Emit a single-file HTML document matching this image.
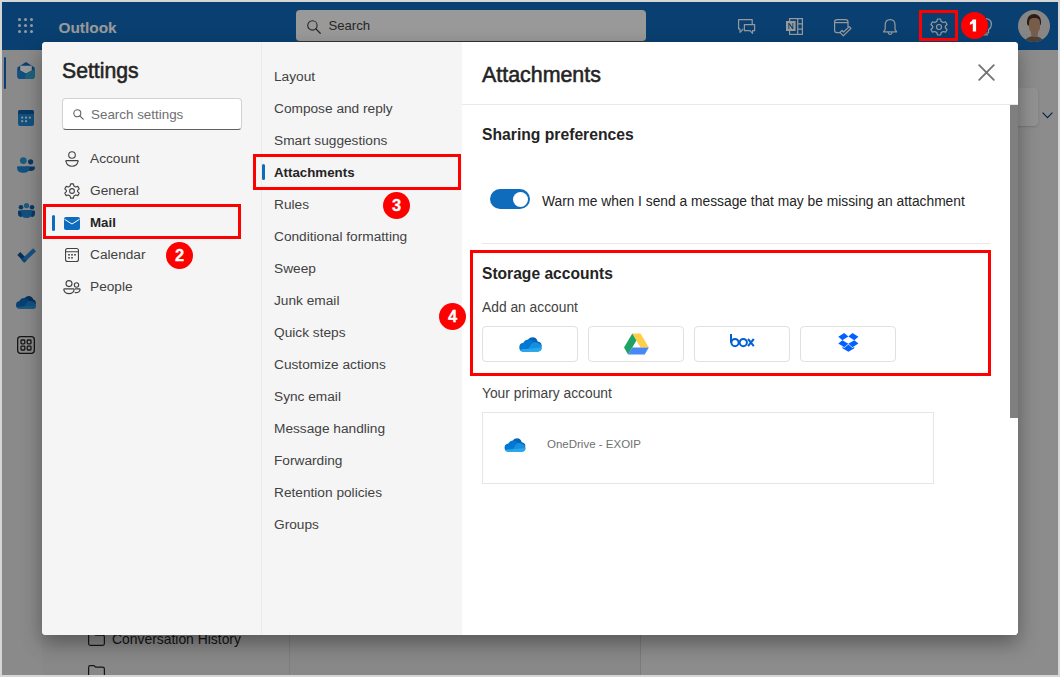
<!DOCTYPE html>
<html><head><meta charset="utf-8">
<style>
*{box-sizing:border-box;margin:0;padding:0}
html,body{width:1060px;height:677px;overflow:hidden;background:#d6d6d6;font-family:"Liberation Sans",sans-serif}
.abs{position:absolute}
svg{position:absolute;overflow:visible}
#app{position:absolute;left:2px;top:2px;width:1056px;height:673px;background:#e9e9e9;overflow:hidden}
#hdr{position:absolute;left:0;top:0;width:1056px;height:48px;background:#0f6cbd}
#rail{position:absolute;left:0;top:48px;width:40px;height:625px;background:#e6e6e6}
#overlay{position:absolute;left:0;top:0;width:1056px;height:673px;background:rgba(0,0,0,0.4)}
#modal{position:absolute;left:42px;top:42px;width:976px;height:593px;background:#fff;border-radius:4px;overflow:hidden;box-shadow:0 8px 20px rgba(0,0,0,0.36)}
#lcol{position:absolute;left:0;top:0;width:220px;height:593px;background:#f5f5f5;border-right:1px solid #ebebeb}
#mcol{position:absolute;left:220px;top:0;width:200px;height:593px;background:#f5f5f5}
#rpane{position:absolute;left:420px;top:0;width:556px;height:593px;background:#fff}
.item{position:absolute;height:32px;line-height:32px;font-size:13.7px;color:#424242;white-space:nowrap}
.sel{font-weight:bold;font-size:13.3px;color:#242424}
.ind{position:absolute;width:3px;height:16px;border-radius:2px;background:#0f6cbd}
.redbox{position:absolute;border:3px solid #ff0000}
.badge{position:absolute;width:27px;height:27px;border-radius:50%;background:#ff0000;color:#fff;font-weight:bold;font-size:16.5px;text-align:center;line-height:27px;-webkit-text-stroke:0.3px #fff}
.t{position:absolute;white-space:nowrap;line-height:1}
.btn{position:absolute;top:284px;width:96px;height:36px;border:1px solid #e0e0e0;border-radius:4px;background:#fff}
</style></head><body>
<div id="app">
  <div id="hdr">
    <svg style="left:16px;top:16px" width="16" height="16" viewBox="0 0 16 16"><g fill="#fff"><circle cx="1.5" cy="1.5" r="1.5"/><circle cx="7.5" cy="1.5" r="1.5"/><circle cx="13.5" cy="1.5" r="1.5"/><circle cx="1.5" cy="7.5" r="1.5"/><circle cx="7.5" cy="7.5" r="1.5"/><circle cx="13.5" cy="7.5" r="1.5"/><circle cx="1.5" cy="13.5" r="1.5"/><circle cx="7.5" cy="13.5" r="1.5"/><circle cx="13.5" cy="13.5" r="1.5"/></g></svg>
    <div class="t" style="left:56.5px;top:18px;font-size:15.4px;font-weight:bold;color:#fff">Outlook</div>
    <div class="abs" style="left:294px;top:8px;width:350px;height:32px;background:#fff;border-radius:4px;border-bottom:1px solid #555"></div>
    <svg style="left:304.5px;top:18px" width="14" height="14" viewBox="0 0 15 15"><circle cx="5.8" cy="5.8" r="5" fill="none" stroke="#424242" stroke-width="1.2"/><path d="M9.4 9.4 L14.2 14.2" stroke="#424242" stroke-width="1.3" stroke-linecap="round"/></svg>
    <div class="t" style="left:326.4px;top:17px;font-size:13.2px;color:#424242">Search</div>
    <!-- chat -->
    <svg style="left:736px;top:17px" width="18" height="16" viewBox="0 0 18 16"><g fill="none" stroke="#fff" stroke-width="1.2" stroke-linejoin="round"><path d="M5.2 9.8 L2.1 13.4 L1.9 9.8 H0.6 V0.6 H14.2 V5.6"/><path d="M6.4 5.6 H16.6 V11.7 H14.5 V14.3 L11.9 11.7 H6.4 Z"/></g></svg>
    <!-- onenote -->
    <svg style="left:784px;top:16px" width="17" height="17" viewBox="0 0 17 17"><g fill="none" stroke="#fff" stroke-width="1.2"><rect x="3.6" y="0.6" width="12.8" height="15.8"/><path d="M11.7 0.6 V16.4 M11.7 5.9 H16.4 M11.7 11.1 H16.4"/></g><rect x="0" y="3" width="9.6" height="10" fill="#fff"/><path d="M2.4 11 V5 H3.4 L6.4 9.2 V5 H7.3 V11 H6.3 L3.3 6.8 V11 Z" fill="#0f6cbd"/></svg>
    <!-- todo -->
    <svg style="left:832px;top:17px" width="18" height="18" viewBox="0 0 18 18"><g fill="none" stroke="#fff" stroke-width="1.2" stroke-linejoin="round"><path d="M6.5 13.6 H3 Q0.6 13.6 0.6 11.2 V3 Q0.6 0.6 3 0.6 H11.6 Q14 0.6 14 3 V8"/><path d="M0.6 3.6 H14"/><path d="M6 13.3 L8.1 11.5 L9.5 13 L15.3 7.6 L17 9.4 L9.3 16.8 Z"/></g></svg>
    <!-- bell -->
    <svg style="left:881px;top:17px" width="15" height="17" viewBox="0 0 15 17"><g fill="none" stroke="#fff" stroke-width="1.2" stroke-linejoin="round"><path d="M7.1 0.6 Q2.2 0.6 2.2 6 V10.2 L0.6 12.9 H13.6 L12 10.2 V6 Q12 0.6 7.1 0.6 Z"/><path d="M5.2 13 Q5.4 15.5 7.1 15.5 Q8.8 15.5 9 13"/></g></svg>
    <!-- gear -->
    <svg style="left:927.5px;top:15.5px" width="18" height="18" viewBox="0 0 16 16"><path d="M6.6 0.9 L9.4 0.9 L9.9 3 L11.7 4 L13.8 3.4 L15.2 5.8 L13.6 7.3 L13.6 8.7 L15.2 10.2 L13.8 12.6 L11.7 12 L9.9 13 L9.4 15.1 L6.6 15.1 L6.1 13 L4.3 12 L2.2 12.6 L0.8 10.2 L2.4 8.7 L2.4 7.3 L0.8 5.8 L2.2 3.4 L4.3 4 L6.1 3 Z" fill="none" stroke="#fff" stroke-width="1.05" stroke-linejoin="round"/><circle cx="8" cy="8" r="2.2" fill="none" stroke="#fff" stroke-width="1.05"/></svg>
    <!-- bulb -->
    <svg style="left:975px;top:16px" width="16" height="18" viewBox="0 0 16 18"><g fill="none" stroke="#fff" stroke-width="1.2"><path d="M8 0.6 Q14.4 0.6 14.4 6.6 Q14.4 9.5 11.5 11.8 V15 H4.5 V11.8 Q1.6 9.5 1.6 6.6 Q1.6 0.6 8 0.6Z"/><path d="M5 16.8 H11"/></g></svg>
    <!-- avatar -->
    <div class="abs" style="left:1016px;top:8px;width:32px;height:32px;border-radius:50%;background:#e2e0de;overflow:hidden">
      <div class="abs" style="left:9px;top:4px;width:14px;height:12px;border-radius:7px 7px 3px 3px;background:#4a3024"></div>
      <div class="abs" style="left:10.5px;top:8px;width:11px;height:15px;border-radius:5px 5px 6px 6px;background:#c99a7c"></div>
      <div class="abs" style="left:4px;top:26px;width:24px;height:12px;border-radius:12px 12px 0 0;background:#7d6a5e"></div>
      <div class="abs" style="left:12.5px;top:21px;width:7px;height:6px;background:#c99a7c;border-radius:0 0 4px 4px"></div>
    </div>
  </div>
  <div id="rail">
    <div class="abs" style="left:2px;top:7px;width:2px;height:32px;background:#0f6cbd;border-radius:1px"></div>
    <!-- mail -->
    <svg style="left:15px;top:12px" width="18" height="17" viewBox="0 0 18 17"><path d="M9 0 L17.6 5.6 V14 Q17.6 17 14.6 17 H3.4 Q0.4 17 0.4 14 V5.6 Z" fill="#0f6cbd"/><path d="M3.2 3.8 H14.8 V8.6 L9 11.6 L3.2 8.6 Z" fill="#fff"/><path d="M0.4 7.2 L9 11.8 L17.6 7.2 V14 Q17.6 17 14.6 17 H3.4 Q0.4 17 0.4 14 Z" fill="#1f86d6"/><path d="M9 11.8 L17.6 7.2 V14 Q17.6 17 14.6 17 H8 Z" fill="#36a9c9" opacity="0.85"/></svg>
    <!-- calendar -->
    <svg style="left:16px;top:60px" width="16" height="16" viewBox="0 0 16 16"><rect x="0" y="0" width="16" height="16" rx="2.2" fill="#1f86d6"/><path d="M0 2.2 Q0 0 2.2 0 H13.8 Q16 0 16 2.2 V4 H0Z" fill="#0f5ea8"/><g fill="#fff" opacity="0.9"><rect x="3.2" y="6.6" width="2" height="2"/><rect x="7" y="6.6" width="2" height="2"/><rect x="10.8" y="6.6" width="2" height="2"/><rect x="3.2" y="10.2" width="2" height="2"/><rect x="7" y="10.2" width="2" height="2"/></g></svg>
    <!-- people -->
    <svg style="left:15px;top:107px" width="18" height="16" viewBox="0 0 18 16"><circle cx="13.6" cy="4.8" r="2.6" fill="#0f5ea8"/><path d="M9 9.6 H17 Q18 9.6 18 10.6 Q18 14 13.5 14 Q10.5 14 9 12.6Z" fill="#0f5ea8"/><circle cx="6.3" cy="3.6" r="3.4" fill="#2b98d8"/><path d="M1 9.2 H11.6 Q12.6 9.2 12.6 10.2 Q12.6 15.8 6.3 15.8 Q0 15.8 0 10.2 Q0 9.2 1 9.2Z" fill="#1f86d6"/></svg>
    <!-- groups -->
    <svg style="left:15.5px;top:152.5px" width="17" height="15" viewBox="0 0 17 15"><circle cx="3" cy="4.3" r="2.3" fill="#0f5ea8"/><circle cx="14" cy="4.3" r="2.3" fill="#0f5ea8"/><path d="M0 8.6 Q0 7.6 1 7.6 H5 V13 Q3.5 14 2.5 14 Q0 13.5 0 11Z" fill="#0f5ea8"/><path d="M17 8.6 Q17 7.6 16 7.6 H12 V13 Q13.5 14 14.5 14 Q17 13.5 17 11Z" fill="#0f5ea8"/><circle cx="8.5" cy="2.6" r="2.6" fill="#2b98d8"/><path d="M4.2 7 H12.8 Q13.8 7 13.8 8 V10 Q13.8 15 8.5 15 Q3.2 15 3.2 10 V8 Q3.2 7 4.2 7Z" fill="#1f86d6"/></svg>
    <!-- todo check -->
    <svg style="left:14px;top:199px" width="20" height="16" viewBox="0 0 20 16"><path d="M2.8 4.6 L8.6 10.4" stroke="#0a4f96" stroke-width="4.2"/><path d="M6.6 12.2 L18.6 0.8" stroke="#2b88d8" stroke-width="4.2"/><path d="M6.2 9.8 L8.6 12.2 L10 10.8" fill="none" stroke="#1a6fc4" stroke-width="2"/></svg>
    <!-- onedrive -->
    <svg style="left:14px;top:246px" width="20" height="13" viewBox="0 0 20 13"><path d="M8 2.6 Q10 0 12.6 0 Q16 0 17.4 3.6 Q20 4.2 20 8 L11 6 Z" fill="#0a4f96"/><path d="M0 9 Q0 5.6 3.4 5 Q5 1.6 9 2 Q11.6 2.3 13 4.5 L7.5 12.8 H3.8 Q0 12.8 0 9Z" fill="#0f6cbd"/><path d="M6.6 12.8 L12.2 5 Q16.4 4.6 18 6 Q20 7 20 9.4 Q20 12.8 16.4 12.8Z" fill="#1f86d6"/><path d="M0.6 11 L20 9.4 Q20 12.8 16.4 12.8 H3.8 Q1.4 12.8 0.6 11Z" fill="#2b98d8"/></svg>
    <!-- apps -->
    <svg style="left:15px;top:286px" width="18" height="18" viewBox="0 0 18 18"><g fill="none" stroke="#242424" stroke-width="1.3"><rect x="0.65" y="0.65" width="16.7" height="16.7" rx="3"/><rect x="4" y="4" width="3.8" height="3.8" rx="0.8"/><rect x="10.2" y="4" width="3.8" height="3.8" rx="0.8"/><rect x="4" y="10.2" width="3.8" height="3.8" rx="0.8"/><rect x="10.2" y="10.2" width="3.8" height="3.8" rx="0.8"/></g></svg>
  </div>
  <!-- background folder pane text -->
  <div class="abs" style="left:40px;top:48px;width:598px;height:625px;background:#e3e3e3"></div>
  <svg style="left:86px;top:631px" width="17" height="13" viewBox="0 0 17 13"><path d="M0.6 2.4 Q0.6 0.6 2.4 0.6 H6 L7.6 2.2 H14.6 Q16.4 2.2 16.4 4 V10.6 Q16.4 12.4 14.6 12.4 H2.4 Q0.6 12.4 0.6 10.6 Z" fill="none" stroke="#242424" stroke-width="1.2"/></svg>
  <div class="t" style="left:110px;top:631px;font-size:13.9px;color:#242424">Conversation History</div>
  <svg style="left:86px;top:663px" width="17" height="13" viewBox="0 0 17 13"><path d="M0.6 2.4 Q0.6 0.6 2.4 0.6 H6 L7.6 2.2 H14.6 Q16.4 2.2 16.4 4 V10.6 Q16.4 12.4 14.6 12.4 H2.4 Q0.6 12.4 0.6 10.6 Z" fill="none" stroke="#242424" stroke-width="1.2"/></svg>
  <div class="abs" style="left:287px;top:48px;width:1px;height:625px;background:#d0d0d0"></div>
  <div class="abs" style="left:638px;top:48px;width:1px;height:625px;background:#cdcdcd"></div>
  <div class="abs" style="left:996px;top:86px;width:40px;height:38px;border-radius:4px;background:#f3f3f3;box-shadow:0 1px 2px rgba(0,0,0,0.15)"></div>
  <svg style="left:1040px;top:110px" width="11" height="7" viewBox="0 0 11 7"><path d="M0.6 0.6 L5.5 5.6 L10.4 0.6" fill="none" stroke="#0f3f70" stroke-width="1.2"/></svg>
  <div id="overlay"></div>
</div>
<div id="modal">
  <div id="lcol">
    <div class="t" style="left:20px;top:18px;font-size:21.2px;color:#242424;-webkit-text-stroke:0.55px #242424">Settings</div>
    <div class="abs" style="left:20px;top:56px;width:180px;height:32px;background:#fff;border:1px solid #d1d1d1;border-bottom-color:#616161;border-radius:4px"></div>
    <svg style="left:31px;top:67px" width="11" height="11" viewBox="0 0 11 11"><circle cx="4.3" cy="4.3" r="3.5" fill="none" stroke="#616161" stroke-width="1.1"/><path d="M6.8 6.8 L10.2 10.2" stroke="#616161" stroke-width="1.2" stroke-linecap="round"/></svg>
    <div class="t" style="left:49px;top:66px;font-size:13.4px;color:#707070">Search settings</div>
    <div class="item" style="left:48px;top:101px">Account</div>
    <div class="item" style="left:48px;top:133px">General</div>
    <div class="ind" style="left:10px;top:173px"></div>
    <div class="item sel" style="left:48px;top:165px">Mail</div>
    <div class="item" style="left:48px;top:197px">Calendar</div>
    <div class="item" style="left:48px;top:229px">People</div>
    <!-- icons -->
    <svg style="left:23px;top:109px" width="14" height="16" viewBox="0 0 14 16"><circle cx="7" cy="4" r="3.3" fill="none" stroke="#424242" stroke-width="1.1"/><path d="M1.2 9.6 H12.8 Q13.3 9.6 13.1 10.4 Q12 15.2 7 15.2 Q2 15.2 0.9 10.4 Q0.7 9.6 1.2 9.6Z" fill="none" stroke="#424242" stroke-width="1.1"/></svg>
    <svg style="left:22px;top:141px" width="16" height="16" viewBox="0 0 16 16"><path d="M6.6 0.9 L9.4 0.9 L9.9 3 L11.7 4 L13.8 3.4 L15.2 5.8 L13.6 7.3 L13.6 8.7 L15.2 10.2 L13.8 12.6 L11.7 12 L9.9 13 L9.4 15.1 L6.6 15.1 L6.1 13 L4.3 12 L2.2 12.6 L0.8 10.2 L2.4 8.7 L2.4 7.3 L0.8 5.8 L2.2 3.4 L4.3 4 L6.1 3 Z" fill="none" stroke="#424242" stroke-width="1.1" stroke-linejoin="round"/><circle cx="8" cy="8" r="2.4" fill="none" stroke="#424242" stroke-width="1.1"/></svg>
    <svg style="left:22px;top:175px" width="16" height="13" viewBox="0 0 16 13"><rect x="0" y="0" width="16" height="13" rx="2" fill="#0f6cbd"/><path d="M0.5 2.3 L8 7 L15.5 2.3" fill="none" stroke="#fff" stroke-width="1"/></svg>
    <svg style="left:23px;top:206px" width="14" height="14" viewBox="0 0 14 14"><rect x="0.55" y="0.55" width="12.9" height="12.9" rx="2" fill="none" stroke="#424242" stroke-width="1.1"/><path d="M0.6 3.8 H13.4" stroke="#424242" stroke-width="1.1"/><g fill="#424242"><rect x="3.2" y="6" width="1.6" height="1.6"/><rect x="6.2" y="6" width="1.6" height="1.6"/><rect x="9.2" y="6" width="1.6" height="1.6"/><rect x="3.2" y="9" width="1.6" height="1.6"/><rect x="6.2" y="9" width="1.6" height="1.6"/></g></svg>
    <svg style="left:21px;top:238px" width="18" height="16" viewBox="0 0 18 16"><circle cx="6" cy="3.6" r="3" fill="none" stroke="#424242" stroke-width="1.1"/><circle cx="13.5" cy="5" r="2.2" fill="none" stroke="#424242" stroke-width="1.1"/><path d="M1.3 8.9 H10.7 Q11.3 8.9 11.2 9.6 Q10.5 13.6 6 13.6 Q1.5 13.6 0.8 9.6 Q0.7 8.9 1.3 8.9Z" fill="none" stroke="#424242" stroke-width="1.1"/><path d="M12 8.9 H16.6 Q17.2 8.9 17.1 9.6 Q16.6 12.6 13 12.6 Q12.3 12.6 11.7 12.4" fill="none" stroke="#424242" stroke-width="1.1"/></svg>
  </div>
  <div id="mcol">
    <div class="item" style="left:12px;top:19px">Layout</div>
    <div class="item" style="left:12px;top:51px">Compose and reply</div>
    <div class="item" style="left:12px;top:83px">Smart suggestions</div>
    <div class="ind" style="left:0px;top:122px"></div>
    <div class="item sel" style="left:12px;top:115px">Attachments</div>
    <div class="item" style="left:12px;top:147px">Rules</div>
    <div class="item" style="left:12px;top:179px">Conditional formatting</div>
    <div class="item" style="left:12px;top:211px">Sweep</div>
    <div class="item" style="left:12px;top:243px">Junk email</div>
    <div class="item" style="left:12px;top:275px">Quick steps</div>
    <div class="item" style="left:12px;top:307px">Customize actions</div>
    <div class="item" style="left:12px;top:339px">Sync email</div>
    <div class="item" style="left:12px;top:371px">Message handling</div>
    <div class="item" style="left:12px;top:403px">Forwarding</div>
    <div class="item" style="left:12px;top:435px">Retention policies</div>
    <div class="item" style="left:12px;top:467px">Groups</div>
  </div>
  <div id="rpane">
    <div class="abs" style="left:0;top:0;width:556px;height:63px;border-bottom:1px solid #e8e8e8"></div>
    <div class="t" style="left:20px;top:23px;font-size:21.4px;color:#242424;-webkit-text-stroke:0.55px #242424">Attachments</div>
    <svg style="left:516px;top:22px" width="17" height="17" viewBox="0 0 17 17"><path d="M1.2 1.2 L15.8 15.8 M15.8 1.2 L1.2 15.8" stroke="#747474" stroke-width="1.9" stroke-linecap="round"/></svg>
    <div class="abs" style="left:548px;top:63px;width:8px;height:313px;background:#7f7f7f"></div>
    <div class="t" style="left:20px;top:85px;font-size:15.7px;font-weight:bold;color:#242424">Sharing preferences</div>
    <div class="abs" style="left:28px;top:147px;width:40px;height:20px;border-radius:10px;background:#0f6cbd"></div>
    <div class="abs" style="left:50.5px;top:149.5px;width:15px;height:15px;border-radius:50%;background:#fff"></div>
    <div class="t" style="left:80px;top:153px;font-size:13.8px;color:#242424">Warn me when I send a message that may be missing an attachment</div>
    <div class="abs" style="left:20px;top:201px;width:508px;height:1px;background:#e8e8e8"></div>
    <div class="t" style="left:20px;top:224px;font-size:15.6px;font-weight:bold;color:#242424">Storage accounts</div>
    <div class="t" style="left:20px;top:259px;font-size:13.8px;color:#424242">Add an account</div>
    <div class="btn" style="left:20px"></div>
    <div class="btn" style="left:126px"></div>
    <div class="btn" style="left:232px"></div>
    <div class="btn" style="left:338px"></div>
    <svg style="left:56.5px;top:294.5px" width="23" height="15" viewBox="0 0 23 15" class="od"><path d="M8.6 3.4 Q10.3 0.3 13.6 0.3 Q17.6 0.3 18.7 4.6 Q22.6 5 22.7 9.2 L12.4 7.6 Z" fill="#0364b8"/><path d="M0.3 10.2 Q0.3 6.3 4.4 5.8 Q6.2 2.4 10 2.6 Q12.6 2.8 14.2 5 L8.2 14.7 H4.4 Q0.3 14.7 0.3 10.2Z" fill="#0078d4"/><path d="M7.4 14.7 L13.9 5.4 Q17.4 4.9 19.6 6.3 Q22.7 7.4 22.7 10.6 Q22.7 14.7 18.6 14.7Z" fill="#1490df"/><path d="M0.9 12.6 L22.6 10.6 Q22.6 14.7 18.6 14.7 H4.4 Q1.9 14.7 0.9 12.6Z" fill="#28a8ea"/></svg>
    <svg style="left:162px;top:291px" width="25" height="22" viewBox="0 0 25 22"><path d="M8.3 0.4 H16.6 L24.8 14.5 H16.5 Z" fill="#ffcf48"/><path d="M8.3 0.4 L12.4 7.5 L4.1 21.6 L0 14.5 Z" fill="#1ea362"/><path d="M4.1 21.6 L8.2 14.5 H24.8 L20.7 21.6 Z" fill="#4688f4"/></svg>
    <svg style="left:267.5px;top:291.5px" width="25" height="13" viewBox="0 0 25 13"><g fill="none" stroke="#0061d5" stroke-width="2"><path d="M1 0 V8.8"/><circle cx="5" cy="8.6" r="3.6"/><circle cx="13.3" cy="8.6" r="3.6"/><path d="M18 5 L23.8 12.2 M23.8 5 L18 12.2"/></g></svg>
    <svg style="left:375.5px;top:290.8px" width="21" height="19" viewBox="0 0 43 40"><path fill="#0061fe" d="M12.5 0L0 8.1l8.7 6.9 12.5-7.8L12.5 0zM0 21.9l12.5 8.1 8.7-7.3-12.5-7.7L0 21.9zm21.2.8l8.7 7.3 12.5-8.1-8.7-6.9-12.5 7.7zm21.2-14.6L29.9 0l-8.7 7.2 12.5 7.8 8.7-6.9zM21.3 24.4l-8.8 7.3-3.7-2.5v2.8l12.5 7.5 12.5-7.5v-2.8l-3.8 2.5-8.7-7.3z"/></svg>
    <div class="t" style="left:20px;top:345px;font-size:13.8px;color:#424242">Your primary account</div>
    <div class="abs" style="left:20px;top:370px;width:452px;height:72px;border:1px solid #e6e6e6"></div>
    <svg style="left:42px;top:395.5px" width="22" height="14" viewBox="0 0 23 15"><path d="M8.6 3.4 Q10.3 0.3 13.6 0.3 Q17.6 0.3 18.7 4.6 Q22.6 5 22.7 9.2 L12.4 7.6 Z" fill="#0364b8"/><path d="M0.3 10.2 Q0.3 6.3 4.4 5.8 Q6.2 2.4 10 2.6 Q12.6 2.8 14.2 5 L8.2 14.7 H4.4 Q0.3 14.7 0.3 10.2Z" fill="#0078d4"/><path d="M7.4 14.7 L13.9 5.4 Q17.4 4.9 19.6 6.3 Q22.7 7.4 22.7 10.6 Q22.7 14.7 18.6 14.7Z" fill="#1490df"/><path d="M0.9 12.6 L22.6 10.6 Q22.6 14.7 18.6 14.7 H4.4 Q1.9 14.7 0.9 12.6Z" fill="#28a8ea"/></svg>
    <div class="t" style="left:85px;top:397px;font-size:11.5px;color:#707070">OneDrive - EXOIP</div>
  </div>
</div>
<div class="redbox" style="left:43px;top:204px;width:198px;height:35px"></div>
<div class="redbox" style="left:253px;top:154px;width:208px;height:36px"></div>
<div class="redbox" style="left:470px;top:250px;width:521px;height:126px"></div>
<div class="redbox" style="left:919px;top:10px;width:39px;height:31px"></div>
<div class="badge" style="left:961px;top:11.5px"><svg style="left:0;top:0" width="27" height="27" viewBox="0 0 27 27"><path d="M11.7 7.4 H15.1 V19.4 H11.8 V11.6 Q10.6 12.4 8.9 12.8 V10.3 Q11 9.5 11.7 7.4 Z" fill="#fff"/></svg></div>
<div class="badge" style="left:166px;top:241.5px">2</div>
<div class="badge" style="left:383px;top:191.5px">3</div>
<div class="badge" style="left:439px;top:302.5px">4</div>
</body></html>
